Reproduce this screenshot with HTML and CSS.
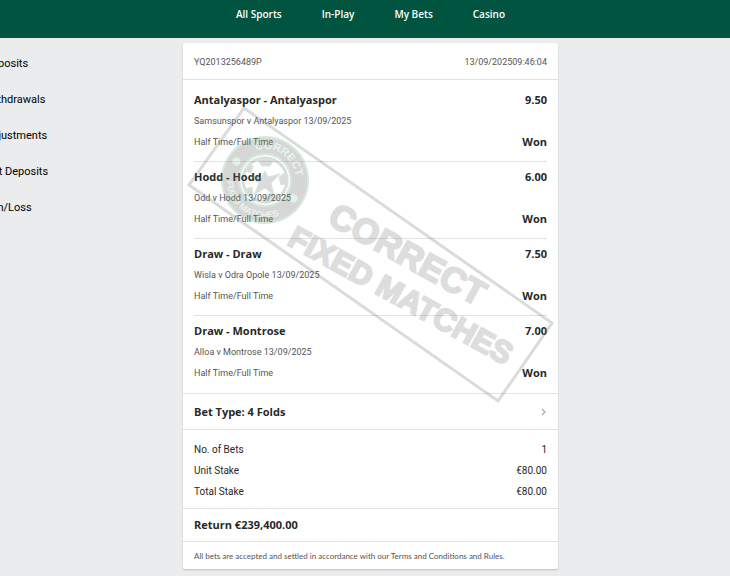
FILE: index.html
```html
<!DOCTYPE html>
<html lang="en">
<head>
    <meta charset="UTF-8">
    <title>My Bets</title>
    <link rel="stylesheet" href="styles.css">
</head>
<body>

    <header class="top-bar">
        <nav class="main-nav">
            <a href="#">All Sports</a>
            <a href="#">In-Play</a>
            <a href="#">My Bets</a>
            <a href="#">Casino</a>
        </nav>
    </header>

    <div class="page">
        <aside class="side-menu">
            <a href="#">Deposits</a>
            <a href="#">Withdrawals</a>
            <a href="#">Adjustments</a>
            <a href="#">Net Deposits</a>
            <a href="#">Win/Loss</a>
        </aside>

        <main class="slip">
            <div class="slip-header">
                <span>YQ2013256489P</span>
                <span>13/09/202509:46:04</span>
            </div>

            <div class="selections">
                <section class="selection">
                    <div class="line">
                        <h2>Antalyaspor - Antalyaspor</h2>
                        <strong>9.50</strong>
                    </div>
                    <p class="match">Samsunspor v Antalyaspor 13/09/2025</p>
                    <div class="line">
                        <p>Half Time/Full Time</p>
                        <strong>Won</strong>
                    </div>
                </section>
                <section class="selection">
                    <div class="line">
                        <h2>Hodd - Hodd</h2>
                        <strong>6.00</strong>
                    </div>
                    <p class="match">Odd v Hodd 13/09/2025</p>
                    <div class="line">
                        <p>Half Time/Full Time</p>
                        <strong>Won</strong>
                    </div>
                </section>
                <section class="selection">
                    <div class="line">
                        <h2>Draw - Draw</h2>
                        <strong>7.50</strong>
                    </div>
                    <p class="match">Wisla v Odra Opole 13/09/2025</p>
                    <div class="line">
                        <p>Half Time/Full Time</p>
                        <strong>Won</strong>
                    </div>
                </section>
                <section class="selection">
                    <div class="line">
                        <h2>Draw - Montrose</h2>
                        <strong>7.00</strong>
                    </div>
                    <p class="match">Alloa v Montrose 13/09/2025</p>
                    <div class="line">
                        <p>Half Time/Full Time</p>
                        <strong>Won</strong>
                    </div>
                </section>
            </div>

            <button type="button" class="bet-type">
                <span>Bet Type: 4 Folds</span>
                <svg width="6" height="8" viewBox="0 0 6 8"><path d="M1 1l3 3-3 3" fill="none" stroke="#aaa" stroke-width="1.2"/></svg>
            </button>

            <dl class="stakes">
                <div class="line"><dt>No. of Bets</dt><dd>1</dd></div>
                <div class="line"><dt>Unit Stake</dt><dd>€80.00</dd></div>
                <div class="line"><dt>Total Stake</dt><dd>€80.00</dd></div>
            </dl>

            <div class="return">Return €239,400.00</div>

            <footer class="terms">All bets are accepted and settled in accordance with our Terms and Conditions and Rules.</footer>

            <!-- stamp over the slip -->
            <svg class="stamp" width="370" height="300" viewBox="0 0 370 300">
                <defs>
                    <path id="arcTop" d="M-31 0A31 31 0 0 1 31 0"/>
                    <path id="arcBottom" d="M-38 0A38 38 0 0 0 38 0"/>
                </defs>
                <polygon class="stamp-frame" points="58,3 3,80 312,296 366,218"/>
                <g class="badge" transform="translate(79 75) rotate(33)">
                    <circle class="badge-ring" r="34"/>
                    <circle class="badge-edge" r="43"/>
                    <circle class="badge-edge" r="26"/>
                    <circle class="badge-dot" cx="-34" cy="0" r="4"/>
                    <circle class="badge-dot" cx="34" cy="0" r="4"/>
                    <text class="badge-text"><textPath href="#arcTop" startOffset="50%">CORRECT</textPath></text>
                    <text class="badge-text small"><textPath href="#arcBottom" startOffset="50%">FIXED MATCHES</textPath></text>
                    <circle class="ball-line" r="22"/>
                    <g transform="rotate(-33)">
                        <path class="ball" d="M0-9L3-3 15-6 6 3 9 15 0 8-11 15-6 3-15-4-4-3z"/>
                        <path class="ball" d="M-8-21L-3-14 5-14 9-20zM21-8L14-3 16 5 22 4zM11 19L8 13 0 15-2 21zM-20 9L-13 7-12 15-16 17zM-20-9L-14-7-12-14-16-16z"/>
                    </g>
                </g>
                <text class="stamp-text big" transform="translate(140 118) rotate(29)">CORRECT</text>
                <text class="stamp-text" transform="translate(100 139) rotate(29)">FIXED MATCHES</text>
            </svg>
        </main>
    </div>

</body>
</html>
```
FILE: styles.css
```css
/* General */
* {
    box-sizing: border-box;
}

body {
    margin: 0;
    font-family: Roboto, "Noto Sans", sans-serif;
    font-size: 10px;
    line-height: 16px;
    background: #ebecee;
    color: #282828;
}

a {
    color: inherit;
    text-decoration: none;
}

h2, p, dl, dd {
    margin: 0;
}

/* Top bar */
.top-bar {
    height: 38px;
    padding: 6px 0 5px 11px;
    background: #005440;
}

.main-nav {
    display: flex;
    justify-content: center;
    gap: 40px;
    color: #fff;
    font-family: "Open Sans", "Noto Sans", sans-serif;
    font-weight: 600;
}

/* Page columns */
.page {
    display: grid;
    grid-template-columns: 183px minmax(0, 375px);
    align-items: start;
    padding: 5px 0 6px;
}

.side-menu {
    display: flex;
    flex-direction: column;
    gap: 20px;
    margin-left: -15px;
    padding-top: 13px;
    font-size: 11px;
    color: #000;
}

/* Bet slip */
.slip {
    position: relative;
    background: #fff;
    border-radius: 2px;
    box-shadow: 0 1px 2px rgba(0, 0, 0, 0.2);
}

.slip-header {
    display: flex;
    justify-content: space-between;
    padding: 11px 11px 9px;
    border-bottom: 1px solid #e1e1e3;
    font-size: 9px;
    color: #555;
}

.line {
    display: flex;
    justify-content: space-between;
    align-items: center;
}

.selections {
    padding: 5px 11px 1px;
    border-bottom: 1px solid #e1e1e3;
}

.selection {
    padding: 5px 0 9px;
    border-bottom: 1px solid #e1e1e3;
}

.selection:last-child {
    border-bottom: 0;
}

.selection h2,
.selection strong {
    font-family: "Open Sans", "Noto Sans", sans-serif;
    font-size: 11px;
    font-weight: 700;
    line-height: 20px;
}

.selection p {
    font-size: 9px;
    line-height: 20px;
    color: #555;
}

.selection .match {
    line-height: 22px;
}

.bet-type {
    display: flex;
    justify-content: space-between;
    align-items: center;
    width: 100%;
    padding: 8px 11px 7px;
    border: 0;
    border-bottom: 1px solid #e1e1e3;
    background: none;
    color: inherit;
    font: 700 11px/20px "Open Sans", "Noto Sans", sans-serif;
    cursor: pointer;
}

.stakes {
    padding: 9px 11px 6px;
    border-bottom: 1px solid #e1e1e3;
}

.stakes .line {
    line-height: 21px;
}

.return {
    padding: 6px 11px;
    border-bottom: 1px solid #e1e1e3;
    font-family: "Open Sans", "Noto Sans", sans-serif;
    font-size: 11px;
    font-weight: 700;
    line-height: 20px;
}

.terms {
    padding: 6px 11px 5px;
    font-family: Lato, "Noto Sans", sans-serif;
    font-size: 8px;
    color: #555;
}

/* Stamp */
.stamp {
    position: absolute;
    top: 62px;
    left: 3px;
    opacity: 0.26;
    pointer-events: none;
}

.stamp-frame {
    fill: none;
    stroke: #777;
    stroke-width: 3;
}

.stamp-text {
    fill: #808080;
    stroke: #808080;
    stroke-width: 2;
    font: 700 31px "Liberation Sans", Arial, sans-serif;
}

.stamp-text.big {
    font-size: 35px;
}

.badge-ring {
    fill: none;
    stroke: #666;
    stroke-width: 18;
}

.badge-edge {
    fill: none;
    stroke: #5fae7c;
    stroke-width: 2;
}

.badge-dot {
    fill: #9fd0ae;
}

.badge-text {
    fill: #a5d6b4;
    font: 700 11px "Liberation Sans", Arial, sans-serif;
    text-anchor: middle;
}

.badge-text.small {
    font-size: 9px;
}

.ball {
    fill: #777;
    stroke: #5fae7c;
}

.ball-line {
    fill: none;
    stroke: #777;
    stroke-width: 3;
}
```
